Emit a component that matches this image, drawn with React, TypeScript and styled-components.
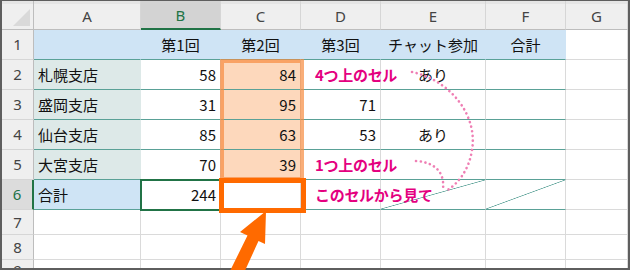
import React from "react";
import styled, { createGlobalStyle } from "styled-components";

const GlobalStyle = createGlobalStyle`
  html, body { margin: 0; padding: 0; background: #fff; }
  body { font-family: "Noto Sans CJK JP", "Noto Sans", sans-serif; }
`;

const TEAL = "#5aa197";
const GRID = "#dadada";
const GREEN = "#217346";
const ORANGE = "#ff6a00";
const PINK = "#e4007f";
const DOTS = "#ef7fb4";

const COLS = ["A", "B", "C", "D", "E", "F", "G"];

const DATA: string[][] = [
  ["", "第1回", "第2回", "第3回", "チャット参加", "合計", ""],
  ["札幌支店", "58", "84", "", "あり", "", ""],
  ["盛岡支店", "31", "95", "71", "", "", ""],
  ["仙台支店", "85", "63", "53", "あり", "", ""],
  ["大宮支店", "70", "39", "", "", "", ""],
  ["合計", "244", "", "", "", "", ""],
  ["", "", "", "", "", "", ""],
  ["", "", "", "", "", "", ""],
  ["", "", "", "", "", "", ""],
];

// annotations written into column D, keyed by row number
const NOTES: Record<number, string> = {
  2: "4つ上のセル",
  5: "1つ上のセル",
  6: "このセルから見て",
};

type Align = "left" | "center" | "right";

const App: React.FC = () => {
  return (
    <>
      <GlobalStyle />
      <Wrapper>
        <Frame>
          <Sheet>
            <Corner />
            {COLS.map((c) => (
              <ColHead key={c} $active={c === "B"}>
                {c}
              </ColHead>
            ))}
            {DATA.map((row, ri) => {
              const r = ri + 1;
              return (
                <React.Fragment key={r}>
                  <RowHead $active={r === 6}>{r}</RowHead>
                  {row.map((value, ci) => {
                    const inTable = r <= 6 && ci <= 5;
                    const note = ci === 3 ? NOTES[r] : undefined;
                    let bg = "#ffffff";
                    if (inTable && r === 1) bg = "#cfe4f5";
                    else if (ci === 0 && r >= 2 && r <= 5) bg = "#dde9e8";
                    else if (ci === 0 && r === 6) bg = "#cfe4f5";
                    else if (ci === 2 && r >= 2 && r <= 5) bg = "#fdd8bc";
                    let align: Align = "right";
                    if (ci === 0 || note) align = "left";
                    else if (r === 1 || ci === 4) align = "center";
                    const hideRight =
                      inTable && (r === 1 || (ci === 0 && r <= 6));
                    return (
                      <Cell
                        key={ci}
                        $bg={bg}
                        $align={align}
                        $bottom={inTable ? TEAL : GRID}
                        $right={hideRight ? bg : GRID}
                        $diag={r === 6 && (ci === 4 || ci === 5)}
                        $selected={r === 6 && ci === 1}
                      >
                        {note ? <Note>{note}</Note> : value}
                      </Cell>
                    );
                  })}
                </React.Fragment>
              );
            })}
          </Sheet>
        </Frame>
        <RangeMark />
        <TargetMark />
        <Overlay viewBox="0 0 630 270" width={630} height={270}>
          <DottedPath d="M412 72 C 450 80 478 115 472 150 C 469 170 458 184 446 191" />
          <DottedPath d="M416 161 C 432 162 445 170 443 189" />
          <polygon
            points="266,211 240,232 247.5,235.5 230,271 243,275 258.5,241 265,244"
            fill={ORANGE}
          />
        </Overlay>
      </Wrapper>
    </>
  );
};
export default App;

const Wrapper = styled("div")({
  position: "relative",
  width: "630px",
  height: "270px",
  overflow: "hidden",
});

const Frame = styled("div")({
  width: "630px",
  height: "270px",
  boxSizing: "border-box",
  border: "2px solid #5e5e5e",
  borderTopWidth: "1.5px",
  background: "#fff",
  overflow: "hidden",
});

const Sheet = styled("div")({
  display: "grid",
  gridTemplateColumns: "32px 107px 80px 80px 80px 105px 80px 1fr",
  gridTemplateRows: "28.5px repeat(6, 30px) 25px 25px 1fr",
  height: "100%",
});

const Corner = styled("div")({
  position: "relative",
  background: "#efefef",
  borderRight: "1px solid #bdbdbd",
  borderBottom: "1px solid #bdbdbd",
  boxSizing: "border-box",
  boxShadow: "inset 0 3px 0 #e5e5e5",
  "&::after": {
    content: '""',
    position: "absolute",
    right: "3px",
    bottom: "3px",
    width: 0,
    height: 0,
    borderLeft: "17px solid transparent",
    borderBottom: "17px solid #d9d9d9",
  },
});

const ColHead = styled("div")<{ $active?: boolean }>(({ $active }) => ({
  display: "flex",
  alignItems: "center",
  justifyContent: "center",
  boxSizing: "border-box",
  background: $active ? "#d3d3d3" : "#efefef",
  boxShadow: $active ? "none" : "inset 0 3px 0 #e5e5e5",
  color: $active ? GREEN : "#444",
  borderRight: "1px solid #d6d6d6",
  borderBottom: $active ? `2px solid ${GREEN}` : "1px solid #bdbdbd",
  fontFamily: '"Noto Sans", "Open Sans", sans-serif',
  fontSize: "15px",
  paddingTop: "2px",
}));

const RowHead = styled("div")<{ $active?: boolean }>(({ $active }) => ({
  display: "flex",
  alignItems: "center",
  justifyContent: "center",
  boxSizing: "border-box",
  background: $active ? "#dcdcdc" : "#efefef",
  color: $active ? GREEN : "#444",
  borderRight: $active ? `2px solid ${GREEN}` : "1px solid #bdbdbd",
  borderBottom: "1px solid #d6d6d6",
  fontFamily: '"Noto Sans", "Open Sans", sans-serif',
  fontSize: "15px",
}));

const Cell = styled("div")<{
  $bg: string;
  $align: Align;
  $bottom: string;
  $right: string;
  $diag?: boolean;
  $selected?: boolean;
}>(({ $bg, $align, $bottom, $right, $diag, $selected }) => ({
  display: "flex",
  alignItems: "center",
  justifyContent:
    $align === "left" ? "flex-start" : $align === "center" ? "center" : "flex-end",
  boxSizing: "border-box",
  padding: "0 4px",
  whiteSpace: "nowrap",
  backgroundColor: $bg,
  backgroundImage: $diag
    ? `linear-gradient(to bottom right, transparent calc(50% - 0.7px), ${TEAL} 50%, transparent calc(50% + 0.7px))`
    : "none",
  borderBottom: `1px solid ${$bottom}`,
  borderRight: `1px solid ${$right}`,
  color: "#111",
  fontSize: "15px",
  position: $selected ? "relative" : "static",
  zIndex: $selected ? 1 : "auto",
  outline: $selected ? `2px solid ${GREEN}` : "none",
  outlineOffset: "-1px",
}));

const Note = styled("span")({
  position: "relative",
  zIndex: 2,
  marginLeft: "10px",
  color: PINK,
  fontWeight: 700,
  fontSize: "15px",
  letterSpacing: "-0.3px",
});

const RangeMark = styled("div")({
  position: "absolute",
  zIndex: 3,
  left: "220px",
  top: "59px",
  width: "84px",
  height: "122px",
  boxSizing: "border-box",
  border: "4px solid rgba(246, 140, 64, 0.7)",
  pointerEvents: "none",
});

const TargetMark = styled("div")({
  position: "absolute",
  zIndex: 4,
  left: "219px",
  top: "178px",
  width: "87px",
  height: "35px",
  boxSizing: "border-box",
  border: `5px solid ${ORANGE}`,
  pointerEvents: "none",
});

const Overlay = styled("svg")({
  position: "absolute",
  zIndex: 5,
  left: 0,
  top: 0,
  pointerEvents: "none",
});

const DottedPath = styled("path")({
  fill: "none",
  stroke: DOTS,
  strokeWidth: 2.6,
  strokeLinecap: "round",
  strokeDasharray: "0.1 4.6",
});
